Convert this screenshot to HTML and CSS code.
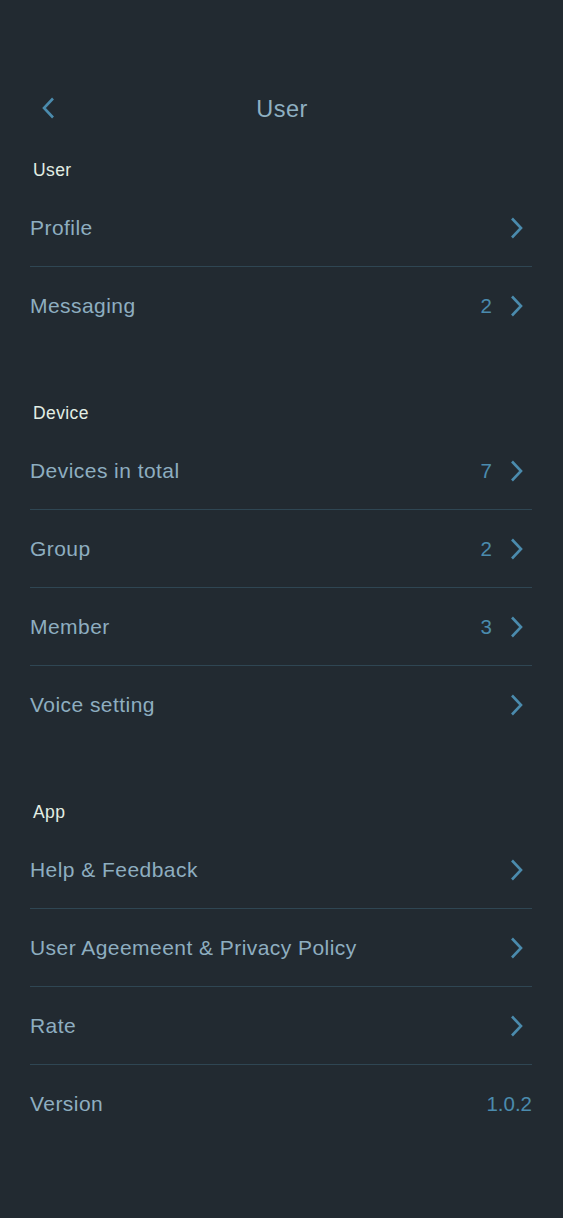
FILE: index.html
```html
<!DOCTYPE html>
<html lang="en">
<head>
<meta charset="utf-8">
<title>User</title>
<link rel="stylesheet" href="styles.css">
</head>
<body>
<div class="page">
  <header class="topbar">
    <svg class="back" width="14" height="22" viewBox="0 0 14 22"><path d="M12 1.5 L3 11 L12 20.5" fill="none" stroke="#4b8bad" stroke-width="2.6"/></svg>
    <h1 class="title">User</h1>
  </header>

  <section class="group">
    <h2 class="group-title">User</h2>
    <div class="row"><span class="label">Profile</span><span class="end"><svg class="chev" width="14" height="22" viewBox="0 0 14 22"><path d="M2 1.5 L11 11 L2 20.5" fill="none" stroke="#4b8bad" stroke-width="2.6"/></svg></span></div>
    <div class="row last"><span class="label">Messaging</span><span class="end"><span class="value">2</span><svg class="chev" width="14" height="22" viewBox="0 0 14 22"><path d="M2 1.5 L11 11 L2 20.5" fill="none" stroke="#4b8bad" stroke-width="2.6"/></svg></span></div>
  </section>

  <section class="group">
    <h2 class="group-title">Device</h2>
    <div class="row"><span class="label">Devices in total</span><span class="end"><span class="value">7</span><svg class="chev" width="14" height="22" viewBox="0 0 14 22"><path d="M2 1.5 L11 11 L2 20.5" fill="none" stroke="#4b8bad" stroke-width="2.6"/></svg></span></div>
    <div class="row"><span class="label">Group</span><span class="end"><span class="value">2</span><svg class="chev" width="14" height="22" viewBox="0 0 14 22"><path d="M2 1.5 L11 11 L2 20.5" fill="none" stroke="#4b8bad" stroke-width="2.6"/></svg></span></div>
    <div class="row"><span class="label">Member</span><span class="end"><span class="value">3</span><svg class="chev" width="14" height="22" viewBox="0 0 14 22"><path d="M2 1.5 L11 11 L2 20.5" fill="none" stroke="#4b8bad" stroke-width="2.6"/></svg></span></div>
    <div class="row last"><span class="label">Voice setting</span><span class="end"><svg class="chev" width="14" height="22" viewBox="0 0 14 22"><path d="M2 1.5 L11 11 L2 20.5" fill="none" stroke="#4b8bad" stroke-width="2.6"/></svg></span></div>
  </section>

  <section class="group">
    <h2 class="group-title">App</h2>
    <div class="row"><span class="label">Help &amp; Feedback</span><span class="end"><svg class="chev" width="14" height="22" viewBox="0 0 14 22"><path d="M2 1.5 L11 11 L2 20.5" fill="none" stroke="#4b8bad" stroke-width="2.6"/></svg></span></div>
    <div class="row"><span class="label">User Ageemeent &amp; Privacy Policy</span><span class="end"><svg class="chev" width="14" height="22" viewBox="0 0 14 22"><path d="M2 1.5 L11 11 L2 20.5" fill="none" stroke="#4b8bad" stroke-width="2.6"/></svg></span></div>
    <div class="row"><span class="label">Rate</span><span class="end"><svg class="chev" width="14" height="22" viewBox="0 0 14 22"><path d="M2 1.5 L11 11 L2 20.5" fill="none" stroke="#4b8bad" stroke-width="2.6"/></svg></span></div>
    <div class="row last"><span class="label">Version</span><span class="end"><span class="value version">1.0.2</span></span></div>
  </section>
</div>
</body>
</html>
```
FILE: styles.css
```css
html, body {
  margin: 0;
  padding: 0;
  background: #222a31;
}
body {
  font-family: "Liberation Sans", Arial, sans-serif;
  min-height: 1218px;
}
.page {
  padding: 88px 31px 0 30px;
}
.topbar {
  position: relative;
  height: 40px;
  display: flex;
  align-items: center;
  justify-content: center;
}
.back {
  position: absolute;
  left: 11px;
  top: 9px;
}
.title {
  margin: 0;
  font-size: 23.5px;
  font-weight: 400;
  color: #8fb0c2;
  line-height: 40px;
  letter-spacing: 0.5px;
  padding: 2px 0 0 2px;
}
.group {
  margin-top: 31px;
}
.group + .group {
  margin-top: 57px;
}
.group-title {
  margin: 0 0 10px 3px;
  height: 20px;
  line-height: 22px;
  font-size: 17.5px;
  font-weight: 400;
  letter-spacing: 0.4px;
  color: #e3eee4;
}
.row {
  height: 77px;
  display: flex;
  align-items: center;
  justify-content: space-between;
  border-bottom: 1px solid #2f4653;
}
.row.last {
  border-bottom-color: transparent;
}
.label {
  font-size: 21px;
  letter-spacing: 0.45px;
  color: #8eaec0;
  padding-top: 1px;
}
.end {
  display: flex;
  align-items: center;
  gap: 18px;
}
.value {
  font-size: 20.5px;
  color: #4b8bad;
  padding-top: 1px;
}
.chev {
  display: block;
  margin-right: 8px;
}
```
